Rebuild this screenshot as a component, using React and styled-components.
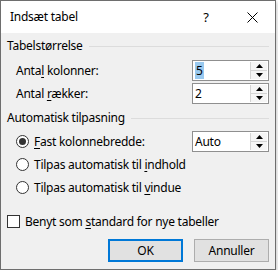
import React from 'react';
import styled, { createGlobalStyle } from 'styled-components';

const GlobalStyle = createGlobalStyle`
  html, body {
    margin: 0;
    padding: 0;
    background: #ffffff;
  }
  body {
    font-family: "Noto Sans", "Open Sans", sans-serif;
    font-size: 12px;
    letter-spacing: -0.25px;
    color: #000000;
  }
`;

const Window = styled.div`
  width: 276px;
  height: 270px;
  box-sizing: border-box;
  border: 1px solid #6e6e6e;
  background: #f0f0f0;
  display: flex;
  flex-direction: column;
  box-shadow: 1px 2px 4px rgba(0, 0, 0, 0.22);
`;

const TitleBar = styled.div`
  height: 32px;
  background: #ffffff;
  display: flex;
  align-items: center;
  padding-left: 9px;
`;

const Title = styled.div`
  flex: 1;
  font-size: 12px;
  line-height: 16px;
`;

const CaptionButton = styled.div`
  width: 46px;
  height: 32px;
  display: flex;
  align-items: center;
  justify-content: center;
  font-size: 13px;
`;

const Content = styled.div`
  display: flex;
  flex-direction: column;
  padding: 5px 6px 0 6px;
`;

const GroupHeader = styled.div`
  display: flex;
  align-items: center;
  gap: 6px;
  height: 16px;
  line-height: 16px;
  margin-top: ${(p) => p.$mt || 0}px;

  &::after {
    content: '';
    flex: 1;
    height: 1px;
    background: #dcdcdc;
  }
`;

const Row = styled.div`
  display: flex;
  align-items: center;
  height: 21px;
  padding-left: ${(p) => p.$indent || 0}px;
  margin-top: ${(p) => p.$mt || 0}px;
`;

const Label = styled.span`
  flex: 1;
  line-height: 16px;
  white-space: nowrap;
`;

const Key = styled.u`
  text-decoration: underline;
  text-underline-offset: 2px;
`;

const SpinBox = styled.div`
  width: 77px;
  height: 21px;
  box-sizing: border-box;
  border: 1px solid #8f8f8f;
  background: #ffffff;
  display: flex;
  align-items: center;
  padding: 0 1px 0 1px;
`;

const SpinValue = styled.span`
  flex: 1;
  line-height: 15px;
  padding-left: 1px;
`;

const Selected = styled.span`
  background: #99c9ef;
  padding: 0 1px;
`;

const Spinner = styled.div`
  width: 16px;
  height: 17px;
  display: flex;
  flex-direction: column;
  border-left: 1px solid #d4d4d4;
`;

const SpinButton = styled.div`
  flex: 1;
  display: flex;
  align-items: center;
  justify-content: center;
  background: #f5f5f5;
  border-top: ${(p) => (p.$down ? '1px solid #d4d4d4' : 'none')};
`;

const Radio = styled.span`
  width: 13px;
  height: 13px;
  box-sizing: border-box;
  border: 1px solid #333333;
  border-radius: 50%;
  background: #ffffff;
  margin-right: 5px;
  display: flex;
  align-items: center;
  justify-content: center;

  &::after {
    content: '';
    width: 7px;
    height: 7px;
    border-radius: 50%;
    background: #333333;
    display: ${(p) => (p.$checked ? 'block' : 'none')};
  }
`;

const Check = styled.span`
  width: 13px;
  height: 13px;
  box-sizing: border-box;
  border: 1px solid #333333;
  background: #ffffff;
  margin-right: 5px;
`;

const ButtonRow = styled.div`
  display: flex;
  justify-content: flex-end;
  gap: 11px;
  margin-top: 7px;
`;

const Button = styled.div`
  width: 75px;
  height: 23px;
  box-sizing: border-box;
  background: #e1e1e1;
  border: ${(p) => (p.$default ? '2px solid #0078d7' : '1px solid #adadad')};
  display: flex;
  align-items: center;
  justify-content: center;
`;

const Arrow = ({ down }) => (
  <svg width="7" height="4" viewBox="0 0 7 4">
    <path d={down ? 'M0 0 L7 0 L3.5 4 Z' : 'M0 4 L7 4 L3.5 0 Z'} fill="#000" />
  </svg>
);

const Spin = ({ children }) => (
  <SpinBox>
    <SpinValue>{children}</SpinValue>
    <Spinner>
      <SpinButton><Arrow /></SpinButton>
      <SpinButton $down><Arrow down /></SpinButton>
    </Spinner>
  </SpinBox>
);

export default function App() {
  return (
    <>
      <GlobalStyle />
      <Window>
        <TitleBar>
          <Title>Indsæt tabel</Title>
          <CaptionButton>?</CaptionButton>
          <CaptionButton>
            <svg width="11" height="11" viewBox="0 0 11 11">
              <path d="M0.5 0.5 L10.5 10.5 M10.5 0.5 L0.5 10.5" stroke="#000" strokeWidth="1" />
            </svg>
          </CaptionButton>
        </TitleBar>
        <Content>
          <GroupHeader>Tabelstørrelse</GroupHeader>
          <Row $indent={9} $mt={6}>
            <Label>Anta<Key>l</Key> kolonner:</Label>
            <Spin><Selected>5</Selected></Spin>
          </Row>
          <Row $indent={9} $mt={2}>
            <Label>Antal <Key>r</Key>ækker:</Label>
            <Spin>2</Spin>
          </Row>

          <GroupHeader $mt={6}>Automatisk tilpasning</GroupHeader>
          <Row $indent={9} $mt={5}>
            <Radio $checked />
            <Label><Key>F</Key>ast kolonnebredde:</Label>
            <Spin>Auto</Spin>
          </Row>
          <Row $indent={9} $mt={2}>
            <Radio />
            <Label>Tilpas automatisk til <Key>i</Key>ndhold</Label>
          </Row>
          <Row $indent={9} $mt={2}>
            <Radio />
            <Label>Tilpas automatisk til <Key>v</Key>indue</Label>
          </Row>

          <Row $mt={13}>
            <Check />
            <Label>Benyt som <Key>s</Key>tandard for nye tabeller</Label>
          </Row>

          <ButtonRow>
            <Button $default>OK</Button>
            <Button>Annuller</Button>
          </ButtonRow>
        </Content>
      </Window>
    </>
  );
}
